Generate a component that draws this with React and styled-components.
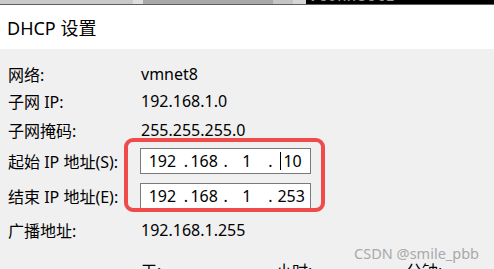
import React from "react";
import styled, { createGlobalStyle } from "styled-components";

const GlobalStyle = createGlobalStyle`
  html, body { margin: 0; padding: 0; background: #f0f0f0; overflow: hidden; }
  body { font-family: "Noto Sans", "Noto Sans CJK SC", sans-serif; color: #000; }
`;

const Page = styled.div`
  position: relative;
  width: 494px;
  height: 269px;
  overflow: hidden;
  background: #f0f0f0;
`;

const TopStrip = styled.div`
  display: flex;
  height: 4px;
  border-bottom: 1px solid #5e5e5e;
  overflow: hidden;
`;

const Seg = styled.div`
  width: ${(p) => (p.$w ? `${p.$w}px` : "auto")};
  flex: ${(p) => (p.$w ? "none" : "1")};
  background: ${(p) => p.$bg};
  overflow: hidden;
`;

const StripText = styled.div`
  font-family: "DejaVu Sans Mono", monospace;
  font-size: 16px;
  line-height: 16px;
  color: #9a9a9a;
  margin-top: -12px;
  padding-left: 2px;
  white-space: nowrap;
`;

const TitleBar = styled.div`
  height: 44px;
  background: #ffffff;
  display: flex;
  align-items: center;
  padding-left: 7px;
  font-size: 18px;
`;

const Body = styled.div`
  padding: 11px 0 0 8px;
`;

const Row = styled.div`
  display: flex;
  align-items: center;
  height: ${(p) => p.$h}px;
  font-size: 16px;
  white-space: nowrap;
`;

const Label = styled.div`
  width: 133px;
  flex: none;
`;

const Value = styled.div`
  padding-left: ${(p) => (p.$pad ?? 0)}px;
`;

const IpBox = styled.div`
  display: flex;
  align-items: center;
  box-sizing: border-box;
  width: 171px;
  height: 26px;
  margin-left: -1px;
  background: #fff;
  border: 1px solid #7a7a7a;
`;

const Field = styled.div`
  width: ${(p) => p.$w}px;
  box-sizing: border-box;
  padding-right: ${(p) => p.$pr || 0}px;
  text-align: center;
  display: flex;
  justify-content: center;
  align-items: center;
`;

const Dot = styled.div`
  width: 4px;
  text-align: center;
`;

const Caret = styled.span`
  display: inline-block;
  width: 1px;
  height: 18px;
  background: #000;
  margin-right: 2px;
`;

const Unit = styled.div`
  width: ${(p) => p.$w}px;
  flex: none;
`;

const Highlight = styled.div`
  position: absolute;
  left: 124px;
  top: 138px;
  width: 201px;
  height: 74px;
  box-sizing: border-box;
  border: 4px solid #ef4b4b;
  border-radius: 9px;
  pointer-events: none;
`;

const Watermark = styled.div`
  position: absolute;
  right: 15px;
  top: 243px;
  font-size: 14.5px;
  color: #a9a9a9;
  white-space: nowrap;
`;

const IP = ({ parts, caret }) => {
  const widths = [43, 36, 41, 38];
  const pads = [0, 3, 2, 0];
  return (
    <IpBox>
      {parts.map((p, i) => (
        <React.Fragment key={i}>
          <Field $w={widths[i]} $pr={pads[i]}>
            {caret && i === 3 ? <Caret /> : null}
            {p}
          </Field>
          {i < 3 ? <Dot>.</Dot> : null}
        </React.Fragment>
      ))}
    </IpBox>
  );
};

export default function App() {
  return (
    <Page>
      <GlobalStyle />
      <TopStrip>
        <Seg $w={133} $bg="#c9c9c9" />
        <Seg $w={10} $bg="#dedede" />
        <Seg $w={130} $bg="#a8a8a8" />
        <Seg $w={20} $bg="#c4c4c4" />
        <Seg $w={13} $bg="#d6d6d6" />
        <Seg $bg="#000">
          <StripText>vconnect1</StripText>
        </Seg>
      </TopStrip>
      <TitleBar>DHCP 设置</TitleBar>
      <Body>
        <Row $h={28}>
          <Label>网络:</Label>
          <Value>vmnet8</Value>
        </Row>
        <Row $h={26}>
          <Label>子网 IP:</Label>
          <Value>192.168.1.0</Value>
        </Row>
        <Row $h={31}>
          <Label>子网掩码:</Label>
          <Value>255.255.255.0</Value>
        </Row>
        <Row $h={31}>
          <Label>起始 IP 地址(S):</Label>
          <IP parts={["192", "168", "1", "10"]} caret />
        </Row>
        <Row $h={40}>
          <Label>结束 IP 地址(E):</Label>
          <IP parts={["192", "168", "1", "253"]} />
        </Row>
        <Row $h={27}>
          <Label>广播地址:</Label>
          <Value>192.168.1.255</Value>
        </Row>
        <Row $h={54}>
          <Label />
          <Unit $w={135}>天:</Unit>
          <Unit $w={130}>小时:</Unit>
          <Unit $w={80}>分钟:</Unit>
        </Row>
      </Body>
      <Highlight />
      <Watermark>CSDN @smile_pbb</Watermark>
    </Page>
  );
}
